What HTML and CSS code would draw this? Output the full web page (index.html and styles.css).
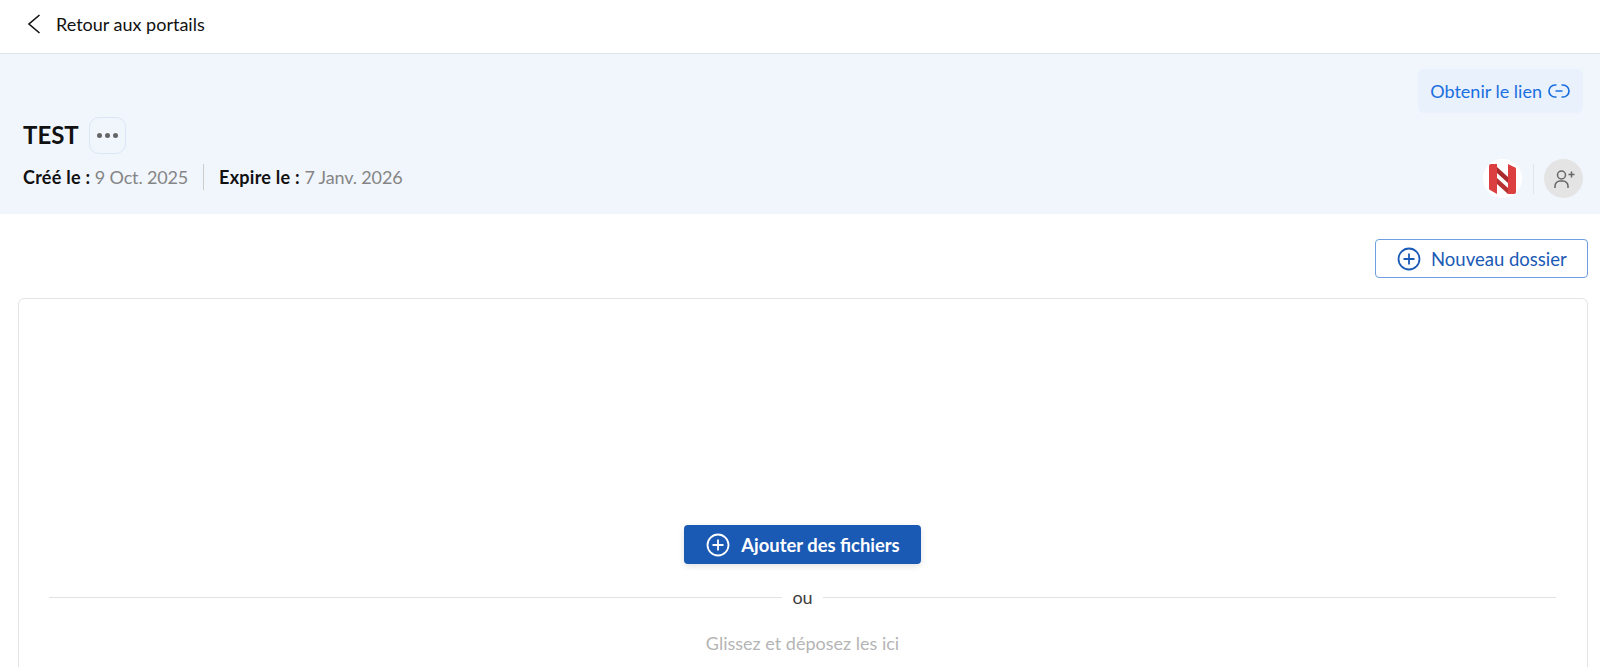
FILE: index.html
```html
<!DOCTYPE html>
<html lang="fr">
<head>
    <meta charset="UTF-8">
    <title>Portail</title>
    <link rel="stylesheet" href="styles.css">
</head>
<body>
    <nav class="topbar">
        <svg class="back-icon" width="16" height="20" viewBox="0 0 16 20"><path d="M14.5 1 L4 10 L14.5 19" fill="none" stroke="#111" stroke-width="1.6"/></svg>
        <span>Retour aux portails</span>
    </nav>

    <header class="hero">
        <div class="hero-action">
            <a class="link-btn">Obtenir le lien
                <svg width="24" height="14" viewBox="0 0 24 14" fill="none" stroke="#1a6fe0" stroke-width="1.7"><path d="M9.5 1H8a6 6 0 0 0 0 12h1.5M14.5 1H16a6 6 0 0 1 0 12h-1.5M8.5 7h7"/></svg>
            </a>
        </div>
        <div class="title-row">
            <h1>TEST</h1>
            <button class="more-btn"><i></i><i></i><i></i></button>
        </div>
        <div class="meta-row">
            <div class="dates">
                <span class="date"><b>Créé le :</b> 9 Oct. 2025</span>
                <span class="date-sep"></span>
                <span class="date"><b>Expire le :</b> 7 Janv. 2026</span>
            </div>
            <div class="people">
                <span class="avatar logo">
                    <svg width="27" height="32" viewBox="0 0 27 32"><path d="M0 3a2 2 0 0 1 2-2h6v30l-7-4a2 2 0 0 1-1-2z" fill="#dc3f3f"/><path d="M19 1l6 3a2 2 0 0 1 2 2v23a2 2 0 0 1-2 2h-6z" fill="#dc3f3f"/><path d="M8 4l11 10v6L8 10z" fill="#a92b2b"/><path d="M8 15l11 10v6L8 21z" fill="#b83232"/></svg>
                </span>
                <span class="people-sep"></span>
                <span class="avatar add">
                    <svg width="22" height="22" viewBox="0 0 22 22" fill="none" stroke="#666" stroke-width="1.5"><circle cx="8.5" cy="7" r="4"/><path d="M2 20v-2a5 5 0 0 1 5-5h3a5 5 0 0 1 5 5v2M15.5 6.5h6M18.5 3.5v6"/></svg>
                </span>
            </div>
        </div>
    </header>

    <main class="content">
        <div class="toolbar">
            <button class="new-folder">
                <svg width="24" height="24" viewBox="0 0 24 24" fill="none" stroke="#1a5ab5" stroke-width="1.8"><circle cx="12" cy="12" r="10.5"/><path d="M12 6.5v11M6.5 12h11"/></svg>
                Nouveau dossier
            </button>
        </div>
        <section class="dropzone">
            <button class="add-files">
                <svg width="24" height="24" viewBox="0 0 24 24" fill="none" stroke="#fff" stroke-width="1.8"><circle cx="12" cy="12" r="10.5"/><path d="M12 6.5v11M6.5 12h11"/></svg>
                Ajouter des fichiers
            </button>
            <div class="divider"><span>ou</span></div>
            <p class="hint">Glissez et déposez les ici</p>
        </section>
    </main>
</body>
</html>
```

FILE: styles.css
```css
* { box-sizing: border-box; }
html, body { height: 100%; }
body { margin: 0; font-family: "Lato", "Open Sans", sans-serif; color: #111; background: #fff; overflow: hidden; }
button { font-family: inherit; cursor: pointer; }

.topbar { display: flex; align-items: center; gap: 15px; height: 54px; padding: 0 0 5px 25px; border-bottom: 1px solid #dfe3ec; font-size: 18px; }
.back-icon { display: block; }

.hero { height: 160px; background: #f1f6fd; padding: 15px 17px 0 23px; }
.hero-action { display: flex; justify-content: flex-end; }
.link-btn { display: flex; align-items: center; gap: 5px; height: 44px; padding: 0 12px; border-radius: 6px; background: #e9f1fc; color: #1a6fe0; font-size: 18px; }
.title-row { display: flex; align-items: center; gap: 10px; margin-top: 4px; }
.title-row h1 { margin: -2px 0 0; font-size: 24px; font-weight: 700; line-height: 37px; }
.more-btn { display: flex; align-items: center; justify-content: center; gap: 3px; width: 37px; height: 37px; padding: 0; background: transparent; border: 1px solid #dbe5f6; border-radius: 10px; }
.more-btn i { width: 5px; height: 5px; border-radius: 50%; background: #666; }
.meta-row { display: flex; justify-content: space-between; align-items: center; margin-top: 5px; }
.dates { display: flex; align-items: center; margin-bottom: 4px; font-size: 18px; color: #858585; letter-spacing: -.15px; }
.date b { color: #111; letter-spacing: .25px; }
.date-sep { width: 1px; height: 26px; margin: 0 15px; background: #ccc; }
.people { display: flex; align-items: center; }
.avatar { display: flex; align-items: center; justify-content: center; width: 39px; height: 39px; border-radius: 50%; }
.logo { background: #fff; }
.add { background: #e4e4e4; }
.people-sep { width: 1px; height: 30px; margin: 0 10px 0 11px; background: #e2e4e8; }

.content { padding: 25px 12px 0 18px; }
.toolbar { display: flex; justify-content: flex-end; }
.new-folder { display: flex; align-items: center; gap: 10px; width: 213px; height: 39px; padding: 0 0 0 21px; background: #fff; border: 1px solid #6f9fe0; border-radius: 4px; color: #1a5ab5; font-size: 18.5px; }
.dropzone { margin-top: 20px; height: 400px; padding: 226px 31px 0 30px; border: 1px solid #e4e4e4; border-radius: 6px; text-align: center; }
.add-files { display: inline-flex; align-items: center; gap: 11px; height: 39px; padding: 0 21px 0 22px; background: #1a5ab5; border: 0; border-radius: 4px; color: #fff; font-size: 18.4px; font-weight: 700; box-shadow: 0 2px 6px rgba(0, 0, 0, .12); }
.divider { display: flex; align-items: center; gap: 10px; margin-top: 22px; font-size: 18px; color: #3d3d3d; }
.divider::before, .divider::after { content: ""; flex: 1; height: 1px; background: #e2e2e2; }
.hint { margin: 24px 0 0; font-size: 18px; color: #b5b5b5; }
```
